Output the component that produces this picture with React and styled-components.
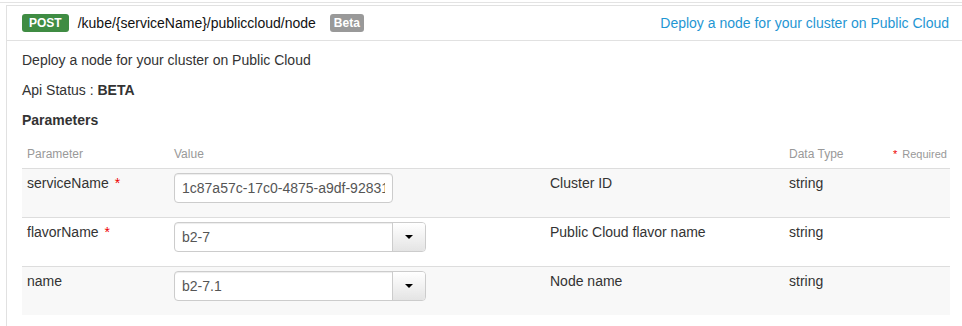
import React from "react";
import styled, { createGlobalStyle } from "styled-components";

const Global = createGlobalStyle`
  html, body { margin: 0; padding: 0; background: #fff; overflow: hidden; }
  body { font-family: "Liberation Sans", Arial, sans-serif; color: #333; }
  * { box-sizing: border-box; }
`;

const Page = styled.div`
  width: 962px;
  height: 326px;
  overflow: hidden;
`;

const PrevEdge = styled.div`
  height: 3px;
  border-bottom: 1px solid #e3e3e3;
`;

const Panel = styled.section`
  margin: 2px 0 0 6px;
  border-top: 1px solid #e1e1e1;
  border-left: 1px solid #e1e1e1;
  min-height: 400px;
`;

const Heading = styled.header`
  display: flex;
  align-items: center;
  height: 35px;
  padding: 0 13px 0 15px;
  border-bottom: 1px solid #e1e1e1;
`;

const Badge = styled.span`
  display: inline-block;
  height: 18px;
  line-height: 18px;
  padding: 0 ${(p) => p.$pad}px;
  border-radius: 3px;
  background: ${(p) => p.$bg};
  color: #fff;
  font-weight: bold;
  font-size: 12px;
`;

const Path = styled.span`
  margin: 0 14px 0 9px;
  font-size: 14px;
  color: #111;
`;

const Summary = styled.a`
  margin-left: auto;
  font-size: 14px;
  color: #1f96d3;
  text-decoration: none;
`;

const Body = styled.div`
  padding: 9px 12px 0 15px;
`;

const Text = styled.p`
  margin: 0 0 10px;
  font-size: 14px;
  line-height: 20px;
  color: #333;
`;

const Title = styled.h4`
  margin: 0 0 10px;
  font-size: 14px;
  line-height: 20px;
  font-weight: bold;
  color: #333;
`;

const Table = styled.table`
  width: 928px;
  border-collapse: collapse;
  table-layout: fixed;
`;

const Th = styled.th`
  padding: 5px;
  font-size: 12px;
  line-height: 18px;
  font-weight: normal;
  color: #999;
  text-align: ${(p) => (p.$right ? "right" : "left")};
  border-bottom: 1px solid #ddd;
`;

const Tr = styled.tr`
  background: ${(p) => (p.$striped ? "#f8f8f8" : "#fff")};
`;

const Td = styled.td`
  padding: 4px 5px 14px;
  vertical-align: top;
  font-size: 14px;
  line-height: 20px;
  color: #333;
  border-top: 1px solid #ddd;
`;

const Star = styled.span`
  color: #e00;
  margin-left: ${(p) => (p.$small ? 0 : 6)}px;
  margin-right: ${(p) => (p.$small ? 5 : 0)}px;
  font-size: ${(p) => (p.$small ? 11 : 14)}px;
`;

const Required = styled.span`
  font-size: 11px;
  color: #999;
`;

const Input = styled.input`
  display: block;
  width: 219px;
  height: 30px;
  padding: 0 7px;
  border: 1px solid #ccc;
  border-radius: 4px;
  box-shadow: inset 0 1px 1px rgba(0, 0, 0, 0.075);
  font-family: "Liberation Sans", Arial, sans-serif;
  font-size: 14px;
  color: #555;
  background: #fff;
  outline: none;
`;

const SelectBox = styled.div`
  display: flex;
  width: 252px;
  height: 30px;
  border: 1px solid #ccc;
  border-radius: 4px;
  background: #fff;
  box-shadow: inset 0 1px 1px rgba(0, 0, 0, 0.075);
  overflow: hidden;
`;

const SelectValue = styled.span`
  flex: 1;
  padding: 0 7px;
  line-height: 28px;
  font-size: 14px;
  color: #555;
`;

const SelectButton = styled.span`
  width: 33px;
  display: flex;
  align-items: center;
  justify-content: center;
  border-left: 1px solid #ccc;
  background: linear-gradient(#ffffff, #e4e4e4);
`;

const Caret = styled.span`
  width: 0;
  height: 0;
  border-top: 4px solid #000;
  border-left: 4px solid transparent;
  border-right: 4px solid transparent;
`;

const Select = ({ value }) => (
  <SelectBox>
    <SelectValue>{value}</SelectValue>
    <SelectButton>
      <Caret />
    </SelectButton>
  </SelectBox>
);

const rows = [
  { name: "serviceName", required: true, kind: "input", value: "1c87a57c-17c0-4875-a9df-92831e8f0c2a", desc: "Cluster ID" },
  { name: "flavorName", required: true, kind: "select", value: "b2-7", desc: "Public Cloud flavor name" },
  { name: "name", required: false, kind: "select", value: "b2-7.1", desc: "Node name" },
];

export default function App() {
  return (
    <Page>
      <Global />
      <PrevEdge />
      <Panel>
        <Heading>
          <Badge $bg="#3f8c43" $pad={7}>POST</Badge>
          <Path>/kube/{"{serviceName}"}/publiccloud/node</Path>
          <Badge $bg="#999" $pad={4}>Beta</Badge>
          <Summary href="#">Deploy a node for your cluster on Public Cloud</Summary>
        </Heading>
        <Body>
          <Text>Deploy a node for your cluster on Public Cloud</Text>
          <Text>
            Api Status : <b>BETA</b>
          </Text>
          <Title>Parameters</Title>
          <Table>
            <colgroup>
              <col style={{ width: 147 }} />
              <col style={{ width: 376 }} />
              <col style={{ width: 239 }} />
              <col style={{ width: 104 }} />
              <col style={{ width: 62 }} />
            </colgroup>
            <thead>
              <tr>
                <Th>Parameter</Th>
                <Th>Value</Th>
                <Th />
                <Th>Data Type</Th>
                <Th $right>
                  <Star $small>*</Star>
                  <Required>Required</Required>
                </Th>
              </tr>
            </thead>
            <tbody>
              {rows.map((r, i) => (
                <Tr key={r.name} $striped={i % 2 === 0}>
                  <Td>
                    {r.name}
                    {r.required && <Star>*</Star>}
                  </Td>
                  <Td>
                    {r.kind === "input" ? (
                      <Input readOnly defaultValue={r.value} />
                    ) : (
                      <Select value={r.value} />
                    )}
                  </Td>
                  <Td>{r.desc}</Td>
                  <Td>string</Td>
                  <Td />
                </Tr>
              ))}
            </tbody>
          </Table>
        </Body>
      </Panel>
    </Page>
  );
}
